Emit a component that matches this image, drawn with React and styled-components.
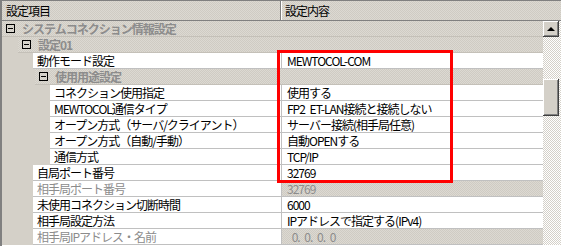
import React from 'react';
import styled, { createGlobalStyle } from 'styled-components';

const GlobalStyle = createGlobalStyle`
  body {
    margin: 0;
    background: #ffffff;
    font-family: "Noto Sans CJK JP", "DejaVu Sans", sans-serif;
  }
`;

const dotted = `
  background-color: #d4d0c8;
  background-image: repeating-conic-gradient(#cfcbc3 0 25%, #dcd9d2 0 50%);
  background-size: 2px 2px;
`;

const Frame = styled.div`
  position: relative;
  width: 561px;
  height: 246px;
  overflow: hidden;
  border-left: 2px solid #808080;
  box-sizing: border-box;
  font-size: 12px;
  letter-spacing: -1px;
  color: #000;
`;

const Header = styled.div`
  display: flex;
  height: 19px;
  border-top: 1px solid #808080;
  border-bottom: 1px solid #808080;
  ${dotted}
`;

const HeaderCell = styled.div`
  width: ${(p) => p.width || 'auto'};
  flex: ${(p) => (p.width ? 'none' : 1)};
  line-height: 19px;
  padding-left: ${(p) => p.pad}px;
  box-sizing: border-box;
  border-right: ${(p) => (p.divider ? '1px solid #808080' : 'none')};
  box-shadow: ${(p) => (p.divider ? '1px 0 0 #ffffff' : 'none')};
`;

const Body = styled.div`
  display: flex;
`;

const Grid = styled.div`
  flex: 1;
  display: flex;
  flex-direction: column;
`;

const Row = styled.div`
  display: flex;
  height: 16px;
  background: #d4d0c8;
`;

const Margin = styled.div`
  width: ${(p) => p.width}px;
  flex: none;
`;

const GroupCell = styled.div`
  flex: 1;
  display: flex;
  align-items: center;
  gap: 7px;
  padding-left: 4px;
  border-bottom: 1px solid #c4c0b8;
  ${dotted}
  color: #8c8c8c;
  font-weight: bold;
  line-height: 15px;
`;

const Toggle = styled.span`
  position: relative;
  width: 9px;
  height: 9px;
  border: 1px solid #000;
  box-sizing: border-box;
  flex: none;

  &::after {
    content: '';
    position: absolute;
    left: 1px;
    top: 3px;
    width: 5px;
    height: 1px;
    background: #000;
  }
`;

const Label = styled.div`
  flex: 1;
  padding-left: 4px;
  line-height: 15px;
  background: #ffffff;
  border-bottom: 1px solid #c0c0c0;
  color: ${(p) => (p.disabled ? '#8c8c8c' : '#000')};
  white-space: nowrap;
  overflow: hidden;
`;

const Value = styled.div`
  width: 262px;
  flex: none;
  padding-left: 5px;
  box-sizing: border-box;
  line-height: 15px;
  word-spacing: 3px;
  border-left: 1px solid #c0c0c0;
  border-bottom: 1px solid #c0c0c0;
  white-space: pre;
  overflow: hidden;
  color: ${(p) => (p.disabled ? '#8c8c8c' : '#000')};
  ${(p) => (p.disabled ? dotted : 'background: #ffffff;')}
`;

const Scrollbar = styled.div`
  width: 18px;
  flex: none;
  display: flex;
  flex-direction: column;
  background-image: repeating-conic-gradient(#ffffff 0 25%, #d4d0c8 0 50%);
  background-size: 2px 2px;
`;

const ScrollButton = styled.div`
  width: 16px;
  height: ${(p) => p.height}px;
  margin-top: ${(p) => p.offset || 0}px;
  box-sizing: border-box;
  background: #d4d0c8;
  box-shadow: inset -1px -1px #404040, inset 1px 1px #ffffff, inset -2px -2px #808080;
  display: flex;
  align-items: center;
  justify-content: center;
`;

const Arrow = styled.span`
  width: 0;
  height: 0;
  border-left: 4px solid transparent;
  border-right: 4px solid transparent;
  border-bottom: 4px solid #000;
  margin-bottom: 1px;
`;

const Highlight = styled.div`
  position: absolute;
  left: 275px;
  top: 50px;
  width: 176px;
  height: 133px;
  border: 3px solid #ff0000;
  box-sizing: border-box;
`;

const rows = [
  { group: true, margin: 0, label: 'システムコネクション情報設定' },
  { group: true, margin: 16, label: '設定01' },
  { margin: 31, label: '動作モード設定', value: 'MEWTOCOL-COM' },
  { group: true, margin: 33, label: '使用用途設定' },
  { margin: 48, label: 'コネクション使用指定', value: '使用する' },
  { margin: 48, label: 'MEWTOCOL通信タイプ', value: 'FP2 ET-LAN接続と接続しない' },
  { margin: 48, label: 'オープン方式（サーバ/クライアント）', value: 'サーバー接続(相手局任意)' },
  { margin: 48, label: 'オープン方式（自動/手動）', value: '自動OPENする' },
  { margin: 48, label: '通信方式', value: 'TCP/IP' },
  { margin: 31, label: '自局ポート番号', value: '32769' },
  { margin: 31, label: '相手局ポート番号', value: '32769', disabled: true },
  { margin: 31, label: '未使用コネクション切断時間', value: '6000' },
  { margin: 31, label: '相手局設定方法', value: 'IPアドレスで指定する(IPv4)' },
  { margin: 31, label: '相手局IPアドレス・名前', value: ' 0. 0. 0. 0', disabled: true },
];

export default function App() {
  return (
    <Frame>
      <GlobalStyle />
      <Header>
        <HeaderCell width="279px" pad={4} divider>設定項目</HeaderCell>
        <HeaderCell pad={4}>設定内容</HeaderCell>
      </Header>
      <Body>
        <Grid>
          {rows.map((row) =>
            row.group ? (
              <Row key={row.label}>
                <Margin width={row.margin} />
                <GroupCell>
                  <Toggle />
                  {row.label}
                </GroupCell>
              </Row>
            ) : (
              <Row key={row.label}>
                <Margin width={row.margin} />
                <Label disabled={row.disabled}>{row.label}</Label>
                <Value disabled={row.disabled}>{row.value}</Value>
              </Row>
            )
          )}
        </Grid>
        <Scrollbar>
          <ScrollButton height={16}>
            <Arrow />
          </ScrollButton>
          <ScrollButton height={37} offset={42} />
        </Scrollbar>
      </Body>
      <Highlight />
    </Frame>
  );
}
